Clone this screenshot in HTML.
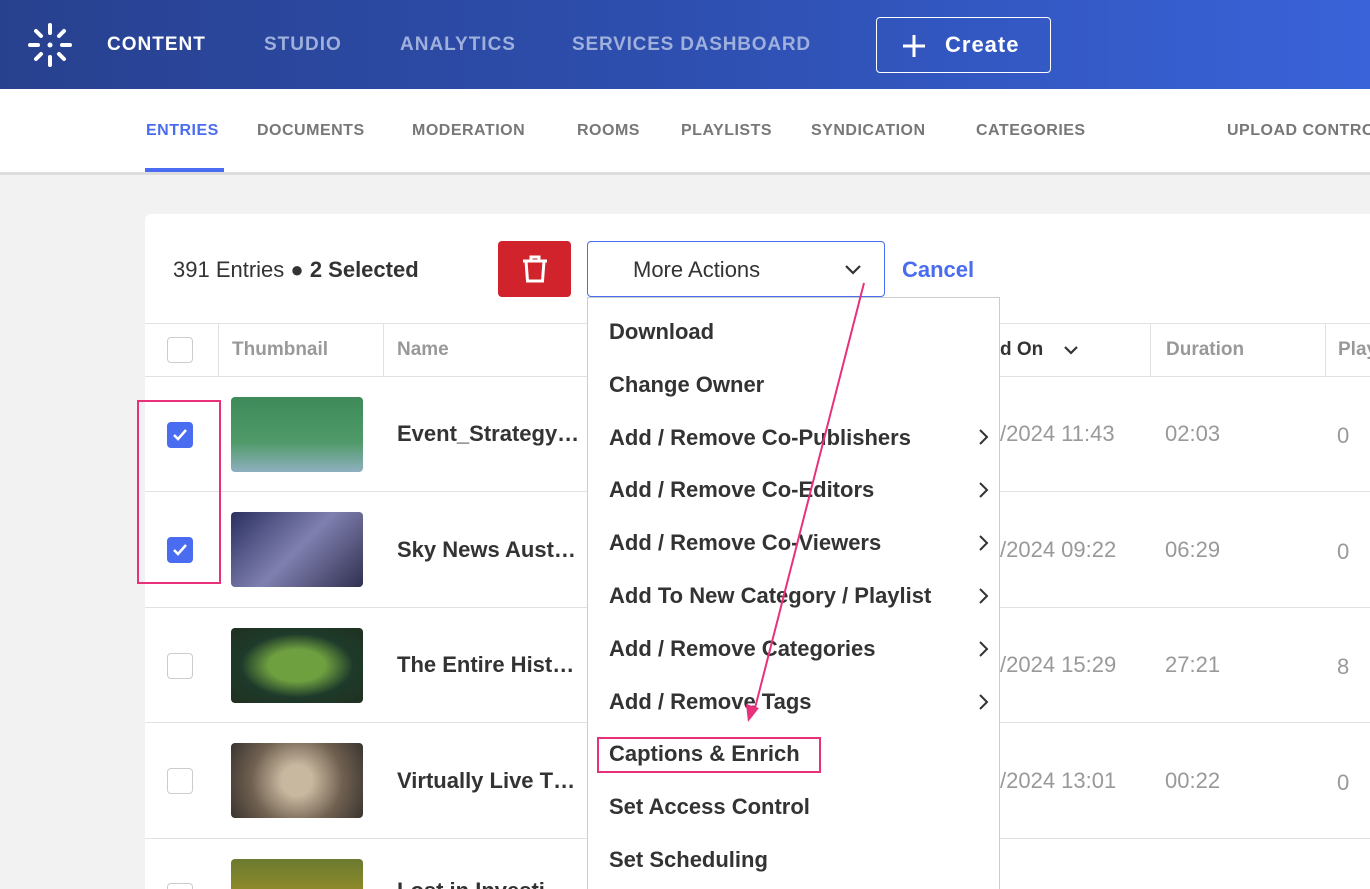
<!DOCTYPE html>
<html><head><meta charset="utf-8"><style>
*{margin:0;padding:0;box-sizing:border-box}
html,body{width:1370px;height:889px;overflow:hidden}
body{background:#f2f2f2;font-family:"Liberation Sans",sans-serif}
#w{position:relative;width:1370px;height:889px;overflow:hidden}
.hdr{position:absolute;left:0;top:0;width:1370px;height:89px;background:linear-gradient(90deg,#28418f,#2e4fb0 50%,#3a63d9)}
.hdr .n{position:absolute;top:34px;font-size:19px;font-weight:bold;letter-spacing:1px;color:#9fb0dd;white-space:nowrap}
.create{position:absolute;left:876px;top:17px;width:175px;height:56px;border:1.5px solid #fff;border-radius:4px;color:#fff;font-size:22px;font-weight:bold;letter-spacing:1px;line-height:53px;padding-left:68px}
.sub{position:absolute;left:0;top:89px;width:1370px;height:86px;background:#fff;border-bottom:3px solid #ddd}
.sub span{position:absolute;top:33px;font-size:16px;font-weight:bold;color:#777;letter-spacing:.5px;white-space:nowrap}
.card{position:absolute;left:145px;top:214px;width:1225px;height:675px;background:#fff;border-radius:6px 0 0 0}
.t{position:absolute;white-space:nowrap}
.hl{position:absolute;left:145px;width:1225px;height:1px;background:#e2e2e2}
.cb{position:absolute;left:167px;width:26px;height:26px;border:1.5px solid #ccc;border-radius:4px;background:#fff}
.cb.on{background:#4a6cf0;border-color:#4a6cf0}
.th{position:absolute;left:231px;width:132px;height:75px;border-radius:4px}
.nm{position:absolute;left:397px;font-size:22px;font-weight:bold;color:#333;white-space:nowrap}
.dt{position:absolute;left:1000px;font-size:22px;color:#999}
.du{position:absolute;left:1165px;font-size:22px;color:#999}
.pl{position:absolute;left:1337px;font-size:22px;color:#999}
.dd{position:absolute;left:587px;top:297px;width:413px;height:592px;background:#fff;border:1px solid #ccc;border-bottom:none}
.dd div{position:absolute;left:21px;font-size:22px;font-weight:bold;color:#333;white-space:nowrap}
.ch{position:absolute;left:978px}
</style></head><body><div id="w">
<div class="hdr">
<svg style="position:absolute;left:27px;top:22px" width="46" height="46" viewBox="0 0 46 46" stroke="#fff" stroke-width="4" stroke-linecap="round"><line x1="23" y1="3" x2="23" y2="11"/><line x1="23" y1="35" x2="23" y2="43"/><line x1="3" y1="23" x2="11" y2="23"/><line x1="35" y1="23" x2="43" y2="23"/><line x1="9" y1="9" x2="14" y2="14"/><line x1="32" y1="32" x2="37" y2="37"/><line x1="37" y1="9" x2="32" y2="14"/><line x1="14" y1="32" x2="9" y2="37"/><circle cx="23" cy="23" r="2.5" fill="#fff" stroke="none"/></svg>
<span class="n" style="left:107px;color:#fff">CONTENT</span>
<span class="n" style="left:264px">STUDIO</span>
<span class="n" style="left:400px">ANALYTICS</span>
<span class="n" style="left:572px;letter-spacing:.8px">SERVICES DASHBOARD</span>
<div class="create"><svg style="position:absolute;left:26px;top:17px" width="22" height="22" stroke="#fff" stroke-width="3"><line x1="11" y1="0" x2="11" y2="22"/><line x1="0" y1="11" x2="22" y2="11"/></svg>Create</div>
</div>
<div class="sub">
<span style="left:146px;color:#4a6cf0">ENTRIES</span>
<div style="position:absolute;left:145px;top:79px;width:79px;height:4px;background:#4a6cf0"></div>
<span style="left:257px">DOCUMENTS</span><span style="left:412px">MODERATION</span><span style="left:577px">ROOMS</span><span style="left:681px">PLAYLISTS</span><span style="left:811px">SYNDICATION</span><span style="left:976px">CATEGORIES</span><span style="left:1227px">UPLOAD CONTROL</span>
</div>
<div class="card"></div>
<div class="t" style="left:173px;top:257px;font-size:22px;color:#333">391 Entries ● <b>2 Selected</b></div>
<div style="position:absolute;left:498px;top:241px;width:73px;height:56px;background:#d0232b;border-radius:4px">
<svg style="position:absolute;left:22px;top:13px" width="30" height="30" viewBox="0 0 30 30" fill="none" stroke="#fff" stroke-width="3"><line x1="3" y1="7" x2="27" y2="7"/><path d="M11 7V3h8v4"/><path d="M6 7l1.5 20h15L24 7"/></svg></div>
<div style="position:absolute;left:587px;top:241px;width:298px;height:56px;border:1px solid #4a6cf0;border-radius:4px;background:#fff"><span class="t" style="left:45px;top:15px;font-size:22px;color:#333">More Actions</span>
<svg style="position:absolute;left:256px;top:22px" width="18" height="12" fill="none" stroke="#333" stroke-width="2.2"><path d="M2 2l7 7 7-7"/></svg></div>
<div class="t" style="left:902px;top:257px;font-size:22px;font-weight:bold;color:#4a6cf0">Cancel</div>
<div class="hl" style="top:323px"></div><div class="hl" style="top:376px"></div><div class="hl" style="top:491px"></div><div class="hl" style="top:607px"></div><div class="hl" style="top:722px"></div><div class="hl" style="top:838px"></div>
<div style="position:absolute;left:218px;top:323px;width:1px;height:53px;background:#e2e2e2"></div>
<div style="position:absolute;left:383px;top:323px;width:1px;height:53px;background:#e2e2e2"></div>
<div style="position:absolute;left:1150px;top:323px;width:1px;height:53px;background:#e2e2e2"></div>
<div style="position:absolute;left:1325px;top:323px;width:1px;height:53px;background:#e2e2e2"></div>
<div class="cb" style="top:337px"></div>
<div class="t" style="left:232px;top:339px;font-size:19px;font-weight:bold;color:#999">Thumbnail</div>
<div class="t" style="left:397px;top:339px;font-size:19px;font-weight:bold;color:#999">Name</div>
<div class="t" style="left:1000px;top:339px;font-size:19px;font-weight:bold;color:#333">d On</div>
<svg style="position:absolute;left:1063px;top:345px" width="16" height="11" fill="none" stroke="#333" stroke-width="2.2"><path d="M2 2l6 6 6-6"/></svg>
<div class="t" style="left:1166px;top:339px;font-size:19px;font-weight:bold;color:#999">Duration</div>
<div class="t" style="left:1338px;top:339px;font-size:19px;font-weight:bold;color:#999">Plays</div>

<div class="cb on" style="top:422px"><svg width="23" height="23" fill="none" stroke="#fff" stroke-width="2.5"><path d="M6 12l4 4 8-9"/></svg></div>
<div class="cb on" style="top:537px"><svg width="23" height="23" fill="none" stroke="#fff" stroke-width="2.5"><path d="M6 12l4 4 8-9"/></svg></div>
<div class="cb" style="top:653px"></div><div class="cb" style="top:768px"></div><div class="cb" style="top:883px"></div>
<div style="position:absolute;left:137px;top:400px;width:84px;height:184px;border:2px solid #e8317a"></div>

<div class="th" style="top:397px;background:linear-gradient(#3e8a5a,#4f9a68 60%,#8fb0c0)"></div>
<div class="th" style="top:512px;background:linear-gradient(135deg,#2a3060,#8080b0 50%,#303050)"></div>
<div class="th" style="top:628px;background:radial-gradient(ellipse,#6fa040 30%,#1e3a2a 60%,#203020)"></div>
<div class="th" style="top:743px;background:radial-gradient(circle,#c8b8a0 20%,#706050 60%,#3a3530)"></div>
<div class="th" style="top:859px;background:linear-gradient(#6a7a30,#c0a020)"></div>

<div class="nm" style="top:421px">Event_Strategy…</div>
<div class="nm" style="top:537px">Sky News Aust…</div>
<div class="nm" style="top:652px">The Entire Hist…</div>
<div class="nm" style="top:768px">Virtually Live T…</div>
<div class="nm" style="top:878px">Lost in Investi…</div>
<div class="dt" style="top:421px">/2024 11:43</div><div class="du" style="top:421px">02:03</div><div class="pl" style="top:423px">0</div>
<div class="dt" style="top:537px">/2024 09:22</div><div class="du" style="top:537px">06:29</div><div class="pl" style="top:539px">0</div>
<div class="dt" style="top:652px">/2024 15:29</div><div class="du" style="top:652px">27:21</div><div class="pl" style="top:654px">8</div>
<div class="dt" style="top:768px">/2024 13:01</div><div class="du" style="top:768px">00:22</div><div class="pl" style="top:770px">0</div>

<div class="dd">
<div style="top:21px">Download</div>
<div style="top:74px">Change Owner</div>
<div style="top:127px">Add / Remove Co-Publishers</div>
<div style="top:179px">Add / Remove Co-Editors</div>
<div style="top:232px">Add / Remove Co-Viewers</div>
<div style="top:285px">Add To New Category / Playlist</div>
<div style="top:338px">Add / Remove Categories</div>
<div style="top:391px">Add / Remove Tags</div>
<div style="top:443px">Captions &amp; Enrich</div>
<div style="top:496px">Set Access Control</div>
<div style="top:549px">Set Scheduling</div>
</div>
<svg class="ch" style="top:428px" width="12" height="18" fill="none" stroke="#333" stroke-width="2"><path d="M2 2l7 7-7 7"/></svg>
<svg class="ch" style="top:481px" width="12" height="18" fill="none" stroke="#333" stroke-width="2"><path d="M2 2l7 7-7 7"/></svg>
<svg class="ch" style="top:534px" width="12" height="18" fill="none" stroke="#333" stroke-width="2"><path d="M2 2l7 7-7 7"/></svg>
<svg class="ch" style="top:587px" width="12" height="18" fill="none" stroke="#333" stroke-width="2"><path d="M2 2l7 7-7 7"/></svg>
<svg class="ch" style="top:640px" width="12" height="18" fill="none" stroke="#333" stroke-width="2"><path d="M2 2l7 7-7 7"/></svg>
<svg class="ch" style="top:693px" width="12" height="18" fill="none" stroke="#333" stroke-width="2"><path d="M2 2l7 7-7 7"/></svg>
<div style="position:absolute;left:597px;top:737px;width:224px;height:36px;border:2px solid #e8317a"></div>
<svg style="position:absolute;left:0;top:0" width="1370" height="889"><line x1="864" y1="283" x2="754" y2="712" stroke="#e8317a" stroke-width="2"/><path d="M748 722l-2-18 13 4z" fill="#e8317a"/></svg>
</div></body></html>
